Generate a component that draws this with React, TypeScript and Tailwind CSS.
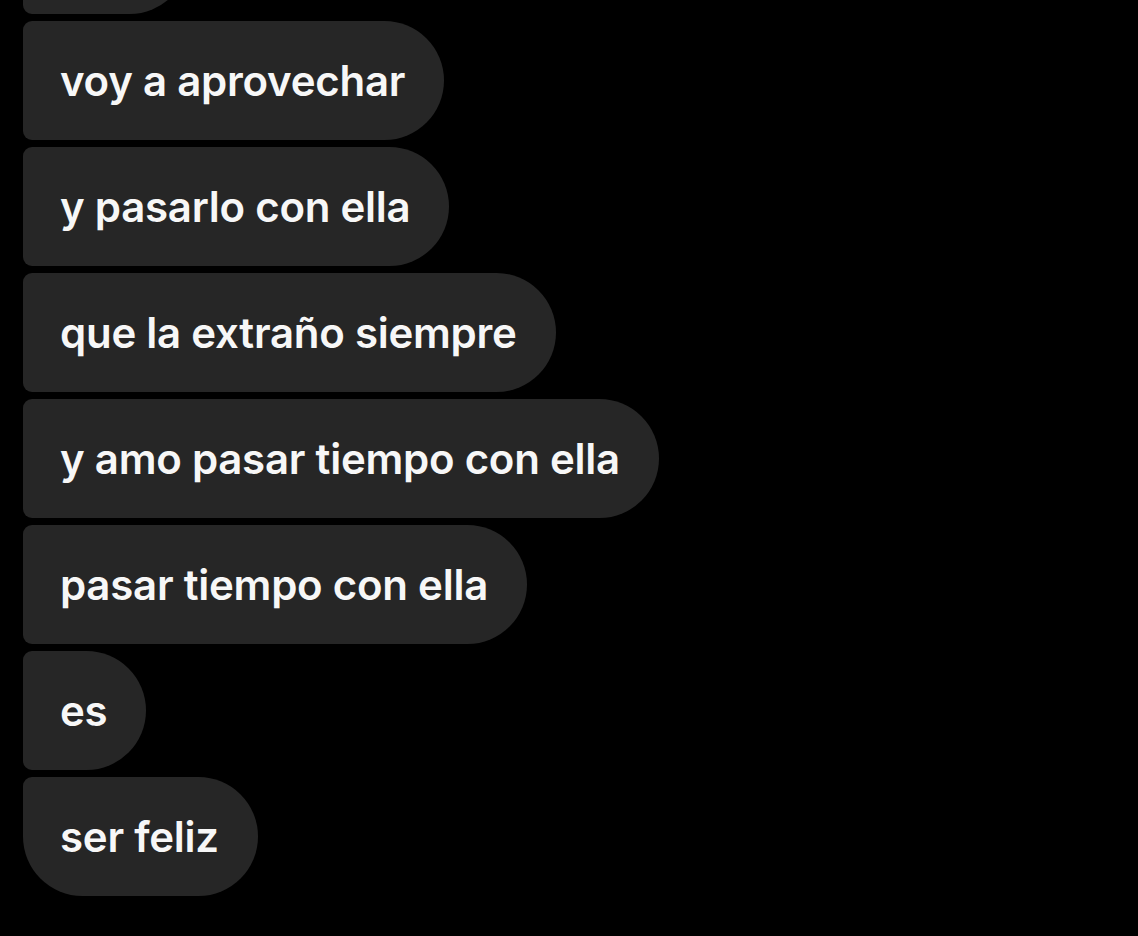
import React from 'react';

const messages = [
  'voy a aprovechar',
  'y pasarlo con ella',
  'que la extraño siempre',
  'y amo pasar tiempo con ella',
  'pasar tiempo con ella',
  'es',
  'ser feliz',
];

const Bubble: React.FC<{ text: string; last?: boolean }> = ({ text, last }) => (
  <div
    className={`self-start h-[119px] flex items-center bg-[#262626] pl-[37px] pr-[39px] rounded-tr-[59.5px] rounded-br-[59.5px] rounded-tl-[9px] ${
      last ? 'rounded-bl-[59.5px]' : 'rounded-bl-[9px]'
    }`}
  >
    <span className="text-[42px] font-semibold text-[#f7f7f7] whitespace-nowrap leading-none tracking-[-0.25px]">
      {text}
    </span>
  </div>
);

export default function App() {
  return (
    <div
      className="w-[1138px] h-[936px] bg-black overflow-hidden"
      style={{ fontFamily: 'Inter, "Noto Sans", sans-serif' }}
    >
      <div className="flex flex-col gap-[7px] pl-[23px] -mt-[105px]">
        {/* partly scrolled-off bubble */}
        <div className="self-start w-[166px] h-[119px] bg-[#262626] rounded-tr-[59.5px] rounded-br-[59.5px] rounded-tl-[59.5px] rounded-bl-[9px]" />
        {messages.map((m, i) => (
          <Bubble key={i} text={m} last={i === messages.length - 1} />
        ))}
      </div>
    </div>
  );
}
